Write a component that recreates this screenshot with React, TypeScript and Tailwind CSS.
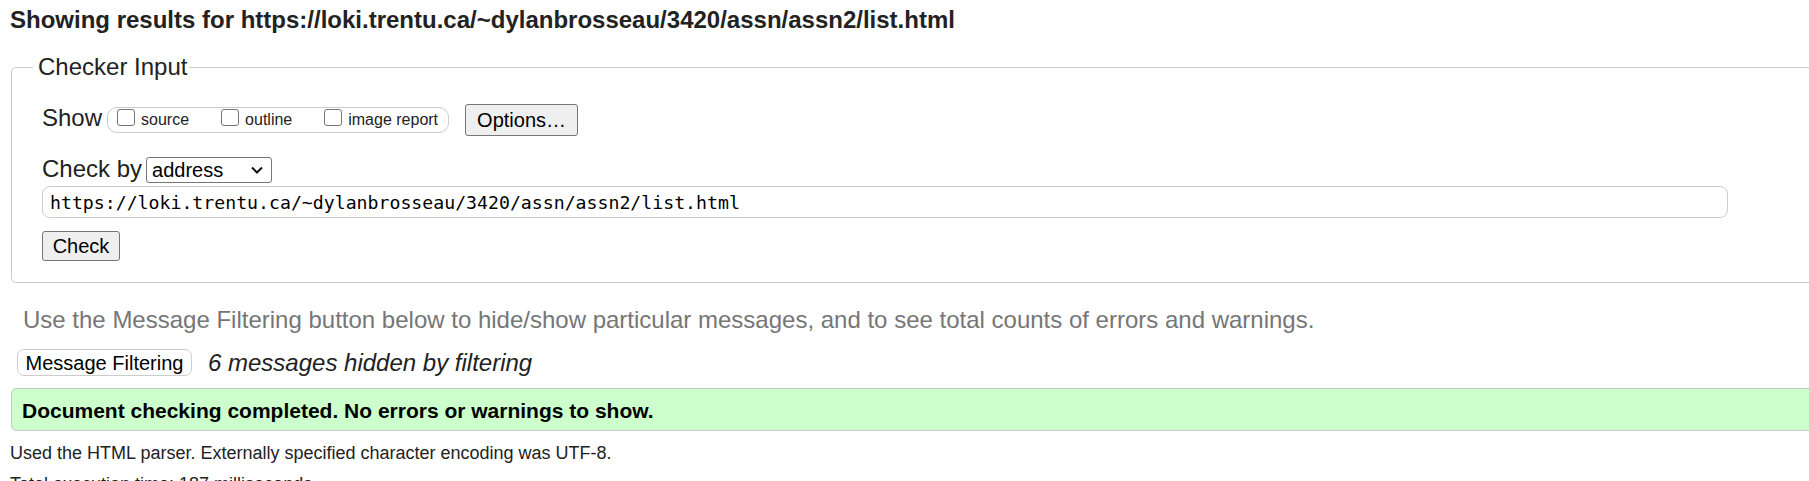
import React from 'react';

const checkedUrl = 'https://loki.trentu.ca/~dylanbrosseau/3420/assn/assn2/list.html';

const ShowOption: React.FC<{ label: string }> = ({ label }) => (
    <label className="flex items-center gap-[6px]">
        <input
            type="checkbox"
            className="mb-[6px] h-[17px] w-[18px] appearance-none rounded-[3px] border border-[#767676] bg-white"
        />
        <span className="text-[16px] leading-[20px]">{label}</span>
    </label>
);

export default function App() {
    return (
        <div className="w-full overflow-hidden bg-white font-['Liberation_Sans',Arial,sans-serif] text-[#222]">
            <div className="w-[1840px] pb-[20px]">
                {/* Titulo */}
                <h2 className="ml-[10px] pt-[6px] text-[24px] leading-[28px] font-bold">
                    Showing results for {checkedUrl}
                </h2>

                {/* Checker input */}
                <fieldset className="ml-[11px] mt-[19px] rounded-[5px] border border-[#ccc]">
                    <legend className="ml-[21px] pl-[5px] pr-[2px] text-[24px] leading-[28px]">
                        Checker Input
                    </legend>
                    <div className="pl-[30px] pt-[23px] pb-[21px]">
                        <div className="flex h-[32px] items-center">
                            <span className="mb-[4px] text-[24px] leading-[28px]">Show</span>
                            <div className="ml-[5px] flex h-[26px] items-center gap-[32px] rounded-[10px] border border-[#ccc] pl-[9px] pr-[10px]">
                                <ShowOption label="source" />
                                <ShowOption label="outline" />
                                <ShowOption label="image report" />
                            </div>
                            <button className="ml-[16px] h-[32px] w-[113px] rounded-[3px] border border-[#767676] bg-[#efefef] text-[20px] leading-none text-black">
                                Options…
                            </button>
                        </div>

                        <div className="mt-[21px] flex h-[26px] items-center">
                            <span className="mb-[2px] text-[24px] leading-[28px]">Check by</span>
                            <div className="ml-[4px] flex h-[26px] w-[126px] items-center justify-between rounded-[3px] border border-[#767676] bg-white pl-[5px] pr-[8px] text-[20px] leading-none text-black">
                                <span>address</span>
                                <svg width="12" height="8" viewBox="0 0 12 8" fill="none">
                                    <path d="M1 1.5 L6 6.5 L11 1.5" stroke="#111" strokeWidth="2" />
                                </svg>
                            </div>
                        </div>

                        <input
                            readOnly
                            value={checkedUrl}
                            className="mt-[3px] block h-[32px] w-[1686px] rounded-[8px] border border-[#ccc] px-[7px] font-['DejaVu_Sans_Mono',monospace] text-[18.2px] text-black outline-none"
                        />

                        <button className="mt-[13px] block h-[30px] w-[78px] rounded-[3px] border border-[#767676] bg-[#efefef] text-[20px] leading-none text-black">
                            Check
                        </button>
                    </div>
                </fieldset>

                <p className="ml-[23px] mt-[23px] text-[24px] leading-[28px] text-[#767676]">
                    Use the Message Filtering button below to hide/show particular messages, and to see total counts of errors and warnings.
                </p>

                <div className="ml-[17px] mt-[15px] flex h-[27px] items-center">
                    <button className="h-[27px] w-[175px] rounded-[7px] border border-[#ccc] bg-white text-[20px] leading-none text-black">
                        Message Filtering
                    </button>
                    <span className="ml-[16px] text-[24px] leading-[28px] italic">
                        6 messages hidden by filtering
                    </span>
                </div>

                {/* Resultado */}
                <div className="ml-[11px] mt-[12px] flex h-[43px] items-center rounded-l-[5px] border border-[#c8c8c8] bg-[#ccffcc] pl-[10px] pt-[3px] text-[21px] font-bold text-black">
                    Document checking completed. No errors or warnings to show.
                </div>

                <p className="ml-[10px] mt-[11px] text-[18px] leading-[22px]">
                    Used the HTML parser. Externally specified character encoding was UTF-8.
                </p>
                <p className="ml-[10px] mt-[9px] text-[18px] leading-[22px]">
                    Total execution time: 187 milliseconds.
                </p>
            </div>
        </div>
    );
}
